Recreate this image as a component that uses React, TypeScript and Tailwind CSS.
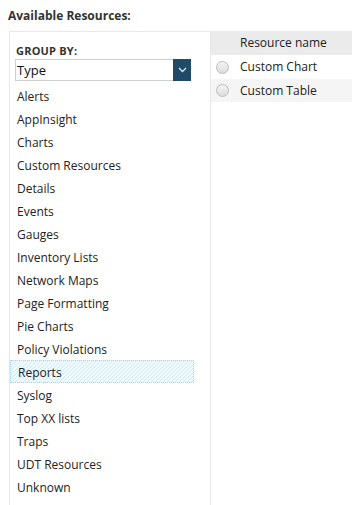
import React from "react";

const items = [
  "Alerts",
  "AppInsight",
  "Charts",
  "Custom Resources",
  "Details",
  "Events",
  "Gauges",
  "Inventory Lists",
  "Network Maps",
  "Page Formatting",
  "Pie Charts",
  "Policy Violations",
  "Reports",
  "Syslog",
  "Top XX lists",
  "Traps",
  "UDT Resources",
  "Unknown",
];

function Radio() {
  return (
    <span className="w-[13px] h-[13px] rounded-full border border-[#bcbcbc] bg-[linear-gradient(#f4f4f4,#dcdcdc)] shrink-0" />
  );
}

export default function App() {
  return (
    <div
      className="w-[352px] h-[505px] bg-white overflow-hidden text-[12px] text-[#222]"
      style={{ fontFamily: '"Open Sans", "Noto Sans", sans-serif' }}
    >
      <div className="h-[31px] pl-[8px] pt-[8px] font-bold leading-[16px] text-[#333]">
        Available Resources:
      </div>
      <div className="flex h-[474px]">
        <div className="ml-[9px] w-[202px] border-t border-l border-r border-[#e8e8e8] flex flex-col">
          <div className="pl-[6px] pt-[12px] text-[11px] font-bold leading-[14px] text-[#333] tracking-[0.2px]">
            GROUP BY:
          </div>
          <div className="ml-[5px] mt-[1px] w-[176px] h-[22px] flex border border-[#cfcfcf] border-r-0">
            <div className="flex-1 pl-[1px] leading-[20px] text-[13px] text-[#111]">Type</div>
            <div className="w-[18px] h-[22px] -mt-[1px] bg-[#1f4a68] flex items-center justify-center">
              <svg width="9" height="6" viewBox="0 0 9 6">
                <path d="M1 1 L4.5 4.5 L8 1" stroke="#dfe8ef" strokeWidth="1.3" fill="none" />
              </svg>
            </div>
          </div>
          <div className="mt-[4px] flex flex-col">
            {items.map((it) => (
              <div
                key={it}
                className={
                  "w-[184px] h-[23px] pl-[7px] leading-[23px] " +
                  (it === "Reports"
                    ? "-mt-[1px] mb-[1px] border border-dotted border-[#a6d6ec] pl-[6px] leading-[21px] bg-[#eef8fc] bg-[linear-gradient(135deg,#d9f0fa_25%,#f7fcfe_25%,#f7fcfe_50%,#d9f0fa_50%,#d9f0fa_75%,#f7fcfe_75%)] bg-size-[4px_4px]"
                    : "")
                }
              >
                {it}
              </div>
            ))}
          </div>
        </div>
        <div className="flex-1 flex flex-col">
          <div className="h-[24px] bg-[#ebebec] pl-[29px] leading-[24px] text-[#222]">Resource name</div>
          <div className="h-[24px] flex items-center pl-[5px] gap-[11px] bg-white">
            <Radio />
            <span>Custom Chart</span>
          </div>
          <div className="h-[23px] flex items-center pl-[5px] gap-[11px] bg-[#f5f5f5]">
            <Radio />
            <span>Custom Table</span>
          </div>
        </div>
      </div>
    </div>
  );
}
